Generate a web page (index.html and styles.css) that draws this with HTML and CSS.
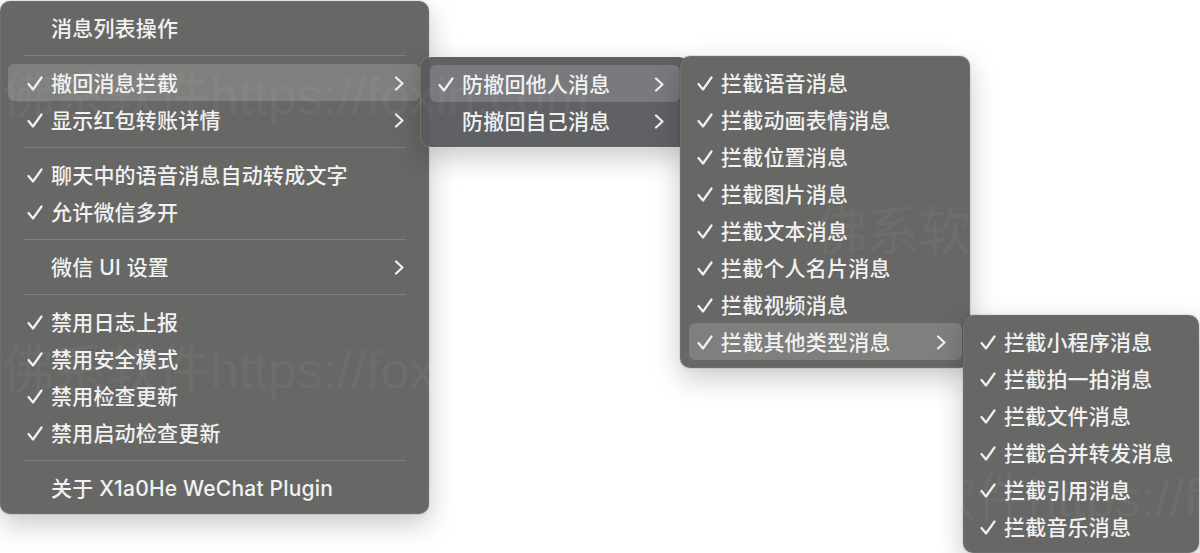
FILE: index.html
```html
<!DOCTYPE html>
<html lang="zh-CN">
<head>
<meta charset="utf-8">
<title>X1a0He WeChat Plugin 菜单</title>
<link rel="stylesheet" href="styles.css">
</head>
<body>
<div class="desk">

  <div class="menu menu-main">
    <div class="item"><span class="check"></span><span class="label">消息列表操作</span></div>
    <div class="sep"></div>
    <div class="item active"><span class="check"><svg viewBox="0 0 16 15"><polyline points="1.5,8 6,13.5 14.5,1.5"/></svg></span><span class="label">撤回消息拦截</span><svg class="chev" viewBox="0 0 10 15"><polyline points="2,1.5 8.5,7.5 2,13.5"/></svg></div>
    <div class="item"><span class="check"><svg viewBox="0 0 16 15"><polyline points="1.5,8 6,13.5 14.5,1.5"/></svg></span><span class="label">显示红包转账详情</span><svg class="chev" viewBox="0 0 10 15"><polyline points="2,1.5 8.5,7.5 2,13.5"/></svg></div>
    <div class="sep"></div>
    <div class="item"><span class="check"><svg viewBox="0 0 16 15"><polyline points="1.5,8 6,13.5 14.5,1.5"/></svg></span><span class="label">聊天中的语音消息自动转成文字</span></div>
    <div class="item"><span class="check"><svg viewBox="0 0 16 15"><polyline points="1.5,8 6,13.5 14.5,1.5"/></svg></span><span class="label">允许微信多开</span></div>
    <div class="sep"></div>
    <div class="item"><span class="check"></span><span class="label">微信 UI 设置</span><svg class="chev" viewBox="0 0 10 15"><polyline points="2,1.5 8.5,7.5 2,13.5"/></svg></div>
    <div class="sep"></div>
    <div class="item"><span class="check"><svg viewBox="0 0 16 15"><polyline points="1.5,8 6,13.5 14.5,1.5"/></svg></span><span class="label">禁用日志上报</span></div>
    <div class="item"><span class="check"><svg viewBox="0 0 16 15"><polyline points="1.5,8 6,13.5 14.5,1.5"/></svg></span><span class="label">禁用安全模式</span></div>
    <div class="item"><span class="check"><svg viewBox="0 0 16 15"><polyline points="1.5,8 6,13.5 14.5,1.5"/></svg></span><span class="label">禁用检查更新</span></div>
    <div class="item"><span class="check"><svg viewBox="0 0 16 15"><polyline points="1.5,8 6,13.5 14.5,1.5"/></svg></span><span class="label">禁用启动检查更新</span></div>
    <div class="sep"></div>
    <div class="item"><span class="check"></span><span class="label">关于 X1a0He WeChat Plugin</span></div>
  </div>

  <div class="menu menu-sub1">
    <div class="item active"><span class="check"><svg viewBox="0 0 16 15"><polyline points="1.5,8 6,13.5 14.5,1.5"/></svg></span><span class="label">防撤回他人消息</span><svg class="chev" viewBox="0 0 10 15"><polyline points="2,1.5 8.5,7.5 2,13.5"/></svg></div>
    <div class="item"><span class="check"></span><span class="label">防撤回自己消息</span><svg class="chev" viewBox="0 0 10 15"><polyline points="2,1.5 8.5,7.5 2,13.5"/></svg></div>
  </div>

  <div class="menu menu-sub2">
    <div class="item"><span class="check"><svg viewBox="0 0 16 15"><polyline points="1.5,8 6,13.5 14.5,1.5"/></svg></span><span class="label">拦截语音消息</span></div>
    <div class="item"><span class="check"><svg viewBox="0 0 16 15"><polyline points="1.5,8 6,13.5 14.5,1.5"/></svg></span><span class="label">拦截动画表情消息</span></div>
    <div class="item"><span class="check"><svg viewBox="0 0 16 15"><polyline points="1.5,8 6,13.5 14.5,1.5"/></svg></span><span class="label">拦截位置消息</span></div>
    <div class="item"><span class="check"><svg viewBox="0 0 16 15"><polyline points="1.5,8 6,13.5 14.5,1.5"/></svg></span><span class="label">拦截图片消息</span></div>
    <div class="item"><span class="check"><svg viewBox="0 0 16 15"><polyline points="1.5,8 6,13.5 14.5,1.5"/></svg></span><span class="label">拦截文本消息</span></div>
    <div class="item"><span class="check"><svg viewBox="0 0 16 15"><polyline points="1.5,8 6,13.5 14.5,1.5"/></svg></span><span class="label">拦截个人名片消息</span></div>
    <div class="item"><span class="check"><svg viewBox="0 0 16 15"><polyline points="1.5,8 6,13.5 14.5,1.5"/></svg></span><span class="label">拦截视频消息</span></div>
    <div class="item active"><span class="check"><svg viewBox="0 0 16 15"><polyline points="1.5,8 6,13.5 14.5,1.5"/></svg></span><span class="label">拦截其他类型消息</span><svg class="chev" viewBox="0 0 10 15"><polyline points="2,1.5 8.5,7.5 2,13.5"/></svg></div>
  </div>

  <div class="menu menu-sub3">
    <div class="item"><span class="check"><svg viewBox="0 0 16 15"><polyline points="1.5,8 6,13.5 14.5,1.5"/></svg></span><span class="label">拦截小程序消息</span></div>
    <div class="item"><span class="check"><svg viewBox="0 0 16 15"><polyline points="1.5,8 6,13.5 14.5,1.5"/></svg></span><span class="label">拦截拍一拍消息</span></div>
    <div class="item"><span class="check"><svg viewBox="0 0 16 15"><polyline points="1.5,8 6,13.5 14.5,1.5"/></svg></span><span class="label">拦截文件消息</span></div>
    <div class="item"><span class="check"><svg viewBox="0 0 16 15"><polyline points="1.5,8 6,13.5 14.5,1.5"/></svg></span><span class="label">拦截合并转发消息</span></div>
    <div class="item"><span class="check"><svg viewBox="0 0 16 15"><polyline points="1.5,8 6,13.5 14.5,1.5"/></svg></span><span class="label">拦截引用消息</span></div>
    <div class="item"><span class="check"><svg viewBox="0 0 16 15"><polyline points="1.5,8 6,13.5 14.5,1.5"/></svg></span><span class="label">拦截音乐消息</span></div>
  </div>

  <div class="watermark wm-a">佛系软件https://foxirj.com</div>
  <div class="watermark wm-b">佛系软件https://foxirj.com</div>
  <div class="watermark wm-c">佛系软件https://foxirj.com</div>
  <div class="watermark wm-d">佛系软件https://foxirj.com</div>
</div>
</body>
</html>
```

FILE: styles.css
```css
html, body {
  margin: 0;
  padding: 0;
  background: #ffffff;
}

body {
  width: 1200px;
  height: 553px;
  overflow: hidden;
  font-family: "Inter", "Noto Sans CJK SC", sans-serif;
  color: #f1f1f1;
}

.desk {
  position: relative;
  width: 1200px;
  height: 553px;
  overflow: hidden;
}

/* popover menus: floating windows on the canvas */
.menu {
  position: absolute;
  display: flex;
  flex-direction: column;
  box-sizing: border-box;
  background: #676765;
  border-radius: 10px;
  box-shadow: 0 0 0 1px rgba(0, 0, 0, 0.08), 0 10px 28px rgba(0, 0, 0, 0.22), inset 0 0 0 1px rgba(255, 255, 255, 0.06);
}

.menu-main {
  left: 0;
  top: 1px;
  width: 429px;
  padding: 8px 9px 8px 8px;
  z-index: 1;
}

.menu-sub1 {
  left: 421px;
  top: 57px;
  width: 268px;
  padding: 8px 9px 8px 9px;
  background: rgba(88, 91, 95, 0.96);
  box-shadow: 0 0 0 1px rgba(255, 255, 255, 0.12), 0 10px 28px rgba(0, 0, 0, 0.22);
  z-index: 2;
}

.menu-sub2 {
  left: 680px;
  top: 56px;
  width: 290px;
  padding: 8px 8px 8px 9px;
  z-index: 3;
}

.menu-sub3 {
  left: 963px;
  top: 315px;
  width: 236px;
  padding: 8px 8px 8px 9px;
  z-index: 4;
}

.item {
  display: flex;
  align-items: center;
  height: 37px;
  padding: 1px 16px 0 8px;
  box-sizing: border-box;
  border-radius: 6px;
  font-size: 21px;
  font-weight: 500;
  line-height: 1;
  white-space: nowrap;
}

.menu-main .item {
  padding-left: 19px;
}

.item.active {
  background: rgba(255, 255, 255, 0.16);
}

.check {
  flex: none;
  width: 24px;
  height: 15px;
  display: flex;
  align-items: center;
}

.check svg {
  width: 16px;
  height: 15px;
}

.check svg polyline,
.chev polyline {
  fill: none;
  stroke: #f1f1f1;
  stroke-width: 2.2;
  stroke-linecap: round;
  stroke-linejoin: round;
}

.label {
  flex: 1;
  letter-spacing: 0.2px;
}

.chev {
  flex: none;
  width: 10px;
  height: 15px;
}

.sep {
  flex: none;
  height: 1px;
  margin: 9px 14px 8px 16px;
  background: rgba(255, 255, 255, 0.16);
}

.watermark {
  position: absolute;
  z-index: 10;
  font-family: "Liberation Sans", "Noto Sans CJK SC", sans-serif;
  font-size: 52px;
  line-height: 1;
  white-space: nowrap;
  color: rgba(255, 255, 255, 0.045);
  pointer-events: none;
}

.wm-a { left: 2px; top: 70px; }
.wm-b { left: 2px; top: 344px; }
.wm-c { left: 815px; top: 206px; }
.wm-d { left: 820px; top: 472px; }
```
